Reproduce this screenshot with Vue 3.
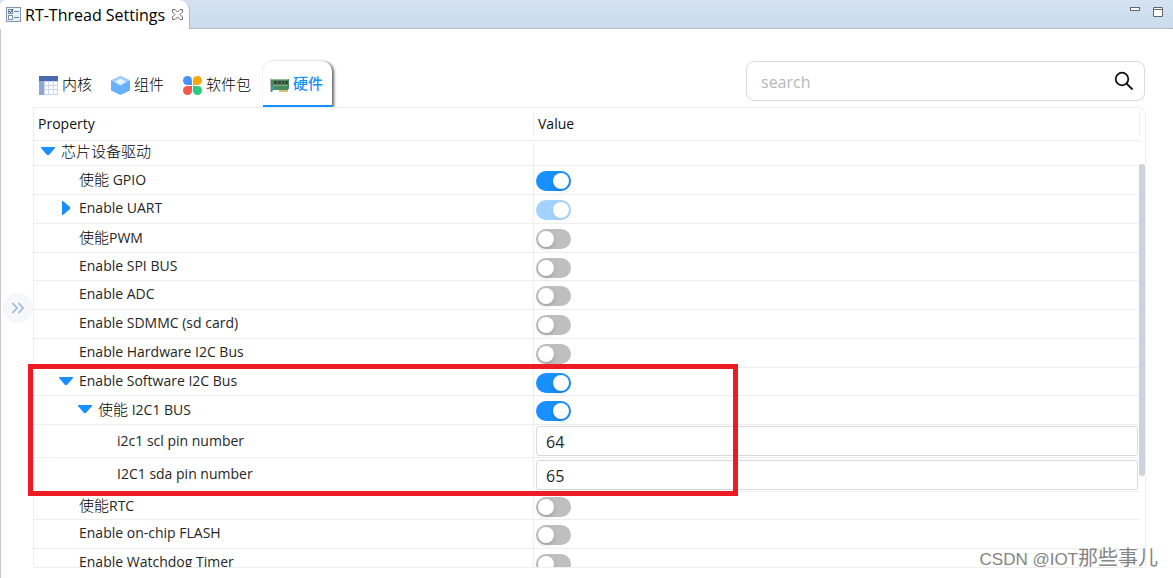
<script setup>
import { ref, reactive } from 'vue'

const tabs = [
  { id: 'kernel', label: '内核' },
  { id: 'component', label: '组件' },
  { id: 'package', label: '软件包' },
  { id: 'hardware', label: '硬件' },
]
const activeTab = ref('hardware')
const search = ref('')

const rows = reactive([
  { zh: '芯片设备驱动', en: '', level: 0, arrow: 'down', kind: 'group' },
  { zh: '使能', en: ' GPIO', level: 1, kind: 'switch', on: true },
  { zh: '', en: 'Enable UART', level: 1, arrow: 'right', kind: 'switch', on: true, disabled: true },
  { zh: '使能', en: 'PWM', level: 1, kind: 'switch', on: false },
  { zh: '', en: 'Enable SPI BUS', level: 1, kind: 'switch', on: false },
  { zh: '', en: 'Enable ADC', level: 1, kind: 'switch', on: false },
  { zh: '', en: 'Enable SDMMC (sd card)', level: 1, kind: 'switch', on: false },
  { zh: '', en: 'Enable Hardware I2C Bus', level: 1, kind: 'switch', on: false },
  { zh: '', en: 'Enable Software I2C Bus', level: 1, arrow: 'down', kind: 'switch', on: true },
  { zh: '使能', en: ' I2C1 BUS', level: 2, arrow: 'down', kind: 'switch', on: true },
  { zh: '', en: 'i2c1 scl pin number', level: 3, kind: 'text', value: '64' },
  { zh: '', en: 'I2C1 sda pin number', level: 3, kind: 'text', value: '65' },
  { zh: '使能', en: 'RTC', level: 1, kind: 'switch', on: false },
  { zh: '', en: 'Enable on-chip FLASH', level: 1, kind: 'switch', on: false },
  { zh: '', en: 'Enable Watchdog Timer', level: 1, kind: 'switch', on: false },
])
</script>

<template>
  <div class="page">
    <header class="titlebar">
      <div class="doc-tab">
        <svg width="15" height="15" viewBox="0 0 15 15" aria-hidden="true">
          <rect x=".5" y=".5" width="14" height="14" fill="#e6f4fd" stroke="#8296b4" />
          <rect x="2.500" y="2.500" width="4" height="4" fill="#fff" stroke="#7d8fa9" />
          <rect x="2.500" y="8.500" width="4" height="4" fill="#fff" stroke="#7d8fa9" />
          <path d="M3 4l1.500 1.500L7 2" fill="none" stroke="#222e44" />
          <path d="M8 4.500h5M8 10.500h5" stroke="#5f7da5" />
        </svg>
        <h1 class="doc-title">RT-Thread Settings</h1>
        <button class="plain" type="button" aria-label="Close">
          <svg width="11" height="11" viewBox="0 0 11 11" aria-hidden="true">
            <path d="M.5.5h2.500l2.500 2.500L8 .5h2.500V3L8 5.500 10.500 8v2.500H8L5.500 8 3 10.500H.5V8L3 5.500.5 3z" fill="#fff" stroke="#6b6b6b" />
          </svg>
        </button>
      </div>
      <div class="window-buttons">
        <button class="plain" type="button" aria-label="Minimize">
          <svg width="10" height="10" viewBox="0 0 10 10" aria-hidden="true">
            <rect x=".5" y=".5" width="9" height="3" fill="#fff" stroke="#666" />
          </svg>
        </button>
        <button class="plain" type="button" aria-label="Maximize">
          <svg width="10" height="10" viewBox="0 0 10 10" aria-hidden="true">
            <path d="M.5.5h9v9h-9zM.5 2.500h9" fill="#fff" stroke="#666" />
          </svg>
        </button>
      </div>
    </header>

    <main class="body">
      <button class="side-toggle" type="button" aria-label="Expand">
        <svg width="14" height="12" viewBox="0 0 14 12" fill="none" stroke="#a0bad8" stroke-width="1.800" aria-hidden="true">
          <path d="M1.500 1l4.500 5-4.500 5M7.500 1L12 6l-4.500 5" />
        </svg>
      </button>

      <div class="toolbar">
        <nav class="tabs">
          <button
            v-for="t in tabs"
            :key="t.id"
            type="button"
            class="tab"
            :class="{ active: t.id === activeTab }"
            @click="activeTab = t.id"
          >
            <svg v-if="t.id === 'kernel'" width="19" height="19" viewBox="0 0 19 19" aria-hidden="true">
              <path d="M0 0h19v19H0z" fill="#c7d5ee" />
              <path d="M0 5h5v14H0z" fill="#8fa6d6" />
              <path d="M0 0h19v5H0z" fill="#4a6bb1" />
              <path d="M6 6h3v3H6zM10 6h4v3h-4zM15 6h3v3h-3zM6 10h3v3H6zM10 10h4v3h-4zM15 10h3v3h-3zM6 14h3v4H6zM10 14h4v4h-4zM15 14h3v4h-3z" fill="#fff" />
            </svg>
            <svg v-else-if="t.id === 'component'" width="19" height="19" viewBox="0 0 19 19" aria-hidden="true">
              <path d="M9.500 0L19 4.500v10L9.500 19 0 14.500v-10z" fill="#66b1ff" />
              <path d="M9.500 0L19 4.500 9.500 10 0 4.500z" fill="#9ccdff" />
              <path d="M9.500 2.500L15 5.500 9.500 9 4 5.500z" fill="#e5f3ff" />
            </svg>
            <svg v-else-if="t.id === 'package'" width="19" height="19" viewBox="0 0 19 19" aria-hidden="true">
              <path d="M4.500 0A4.500 4.500 0 0 1 9 4.500V9H4.500a4.500 4.500 0 0 1 0-9z" fill="#4a90fb" />
              <path d="M14.500 0a4.500 4.500 0 0 1 0 9H10V4.500A4.500 4.500 0 0 1 14.500 0z" fill="#f5a90a" />
              <path d="M4.500 10H9v4.500A4.500 4.500 0 1 1 4.500 10z" fill="#f4574b" />
              <path d="M10 10h4.500a4.500 4.500 0 1 1-4.500 4.500z" fill="#2dcb7c" />
            </svg>
            <svg v-else width="19" height="19" viewBox="0 0 19 19" aria-hidden="true">
              <path d="M0 4h19v10h-1v3H9v-2H3l-1 2H1z" fill="#4b8a5f" />
              <path d="M0 3h1v13H0z" fill="#b4bab6" />
              <path d="M1 4.500h17" stroke="#8fbb95" />
              <path d="M4 6h3v3H4zM8 6h3v3H8zM12 6h2v3h-2zM15 6h3v3h-3z" fill="#33463a" />
              <path d="M3 10.500h15" stroke="#8dbb8c" stroke-dasharray="2 1" />
              <path d="M9 15h9v2H9z" fill="#d5c374" />
              <path d="M1 11l3 2-2 2H1z" fill="#3a9be8" />
            </svg>
            <span>{{ t.label }}</span>
          </button>
        </nav>
        <form class="search" role="search" @submit.prevent>
          <input v-model="search" type="text" placeholder="search" aria-label="search" />
          <button class="plain" type="submit" aria-label="Search">
            <svg width="20" height="20" viewBox="0 0 20 20" fill="none" stroke="#111" stroke-width="1.800" aria-hidden="true">
              <circle cx="8" cy="8" r="6.300" />
              <path d="M12.500 12.500l6 6" />
            </svg>
          </button>
        </form>
      </div>

      <section class="panel">
        <div class="viewport">
          <table class="tree">
            <colgroup>
              <col class="col-name" />
              <col />
            </colgroup>
            <thead>
              <tr>
                <th scope="col"><div class="head">Property</div></th>
                <th scope="col"><div class="head">Value</div></th>
              </tr>
            </thead>
            <tbody>
              <tr v-for="(r, i) in rows" :key="i" :class="'row-' + r.kind">
                <td>
                  <div class="name" :class="'level-' + r.level">
                    <button v-if="r.arrow" type="button" class="plain arrow" :aria-label="'Toggle ' + r.zh + r.en">
                      <svg v-if="r.arrow === 'down'" width="14" height="8" viewBox="0 0 14 8" aria-hidden="true">
                        <path d="M0 0h14v1L8 8H6L0 1z" fill="#1890ff" />
                      </svg>
                      <svg v-else width="14" height="14" viewBox="0 0 14 14" aria-hidden="true">
                        <path d="M3 0h1l7 6v2l-7 6H3z" fill="#1890ff" />
                      </svg>
                    </button>
                    <span v-else class="arrow"></span>
                    <label :for="r.kind === 'group' ? undefined : 'field-' + i"><span v-if="r.zh" class="zh">{{ r.zh }}</span>{{ r.en }}</label>
                  </div>
                </td>
                <td>
                  <input
                    v-if="r.kind === 'switch'"
                    :id="'field-' + i"
                    v-model="r.on"
                    type="checkbox"
                    role="switch"
                    class="switch"
                    :disabled="r.disabled"
                  />
                  <input v-else-if="r.kind === 'text'" :id="'field-' + i" v-model="r.value" type="text" class="field" />
                </td>
              </tr>
            </tbody>
          </table>
        </div>
        <div class="scroll-thumb"></div>
        <div class="highlight"></div>
      </section>
    </main>

    <div class="watermark">CSDN @IOT<span>那些事儿</span></div>
  </div>
</template>

<style>
body {
  margin: 0;
  overflow: hidden;
}
</style>

<style scoped>
* {
  box-sizing: border-box;
}
.page {
  position: relative;
  display: flex;
  flex-direction: column;
  height: 100vh;
  overflow: hidden;
  background: #fff;
  color: #262626;
  font-family: "Open Sans", "Noto Sans CJK SC", sans-serif;
  font-size: 14px;
}
button,
input {
  font: inherit;
  color: inherit;
}
svg {
  display: block;
  flex: none;
}
.plain {
  padding: 0;
  border: 0;
  background: none;
}
.titlebar {
  display: flex;
  justify-content: space-between;
  flex: none;
  height: 29px;
  border-bottom: 1px solid #b4b4cb;
  background: linear-gradient(#d4e2f1, #ccdcec);
}
.doc-tab {
  display: flex;
  align-items: center;
  gap: 4px;
  height: 29px;
  padding: 0 6px;
  border-right: 1px solid #b4b4cb;
  border-radius: 6px 10px 0 0;
  background: #fff;
}
.doc-title {
  margin: 0 3px 0 0;
  color: #000;
  font-size: 16px;
  font-weight: 400;
  line-height: 20px;
}
.window-buttons {
  display: flex;
  align-items: flex-start;
  gap: 13px;
  padding: 7px 10px 0 0;
}
.body {
  position: relative;
  display: flex;
  flex: 1;
  flex-direction: column;
  min-height: 0;
  padding: 32px 27px 10px 32px;
  border-left: 1px solid #c8c8c8;
}
.side-toggle {
  position: absolute;
  top: 264px;
  left: 2px;
  display: grid;
  place-items: center;
  width: 30px;
  height: 30px;
  padding: 0;
  border: 0;
  border-radius: 50%;
  background: #f5f7fa;
}
.toolbar {
  display: flex;
  justify-content: space-between;
  flex: none;
  height: 46px;
}
.tabs {
  display: flex;
  gap: 1px;
  margin-left: -3px;
}
.tab {
  display: flex;
  align-items: center;
  gap: 4px;
  padding: 0 9px;
  border: 0;
  border-radius: 10px 10px 0 0;
  background: none;
  color: #000;
  font-size: 15px;
  font-weight: 300;
  line-height: 20px;
}
.tab svg {
  margin-top: 3px;
}
.tab.active {
  margin-left: 2px;
  padding: 0 9px 0 7px;
  border-bottom: 2px solid #1890ff;
  background: #fff;
  box-shadow: 2px 1px 3px rgba(0, 0, 0, 0.6), 0 0 1px rgba(0, 0, 0, 0.2);
  clip-path: inset(-2px -6px 0 -2px);
  color: #1890ff;
  font-weight: 500;
}
.search {
  display: flex;
  align-items: center;
  flex: 0 1 399px;
  height: 40px;
  margin-right: 1px;
  padding: 0 10px 0 14px;
  border: 1px solid #d9d9d9;
  border-radius: 8px;
}
.search input {
  flex: 1;
  min-width: 0;
  padding: 2px 0 0;
  border: 0;
  outline: 0;
  background: none;
  font-size: 16px;
}
.search input::placeholder {
  color: #b8b8b8;
}
.panel {
  position: relative;
  flex: 1;
  min-height: 0;
  border: 1px solid #eee;
  border-radius: 0 8px 0 0;
}
.viewport {
  height: 100%;
  overflow: hidden;
  padding-right: 5px;
}
.tree {
  width: 100%;
  border-spacing: 0;
  table-layout: fixed;
}
.col-name {
  width: 500px;
}
th {
  height: 33px;
  padding: 0;
  border-bottom: 1px solid #eee;
  color: #111;
  font-weight: 500;
  text-align: left;
}
.head {
  padding-left: 4px;
  border-right: 1px solid #eee;
  line-height: 24px;
}
td {
  height: 29px;
  padding: 0 2px;
  border-bottom: 1px solid #eee;
  vertical-align: top;
}
td:first-child {
  padding: 0;
  border-right: 1px solid #eee;
}
tr:nth-child(4n + 1) td {
  height: 28px;
}
.row-group .name {
  height: 20px;
}
tr.row-group td {
  height: 25px;
}
.row-text .name {
  height: 32px;
}
tr.row-text td {
  height: 33px;
}
tr.row-text + .row-text td {
  height: 34px;
}
.name {
  display: flex;
  align-items: center;
  gap: 6px;
  height: 26px;
  font-weight: 400;
  line-height: 20px;
  white-space: pre;
}
.arrow {
  display: grid;
  place-items: center;
  width: 14px;
}
.level-0 {
  padding-left: 7px;
}
.level-1 {
  padding-left: 25px;
}
.level-2 {
  padding-left: 44px;
}
.level-3 {
  padding-left: 63px;
}
.zh {
  color: #000;
  font-size: 15px;
  font-weight: 300;
}
.switch {
  display: block;
  width: 35px;
  height: 20px;
  margin: 5px 0 0;
  border-radius: 10px;
  appearance: none;
  background: #bfbfbf;
}
.switch::before {
  display: block;
  float: left;
  width: 16px;
  height: 16px;
  margin: 2px;
  border-radius: 50%;
  background: #fff;
  box-shadow: 0 2px 4px rgba(0, 35, 11, 0.2);
  content: "";
}
.switch:checked {
  background: #1890ff;
}
.switch:checked::before {
  margin-left: 17px;
}
.switch:disabled {
  opacity: 0.4;
}
.field {
  display: block;
  width: 100%;
  height: 30px;
  margin-top: 1px;
  padding: 1px 9px 0;
  border: 1px solid #d9d9d9;
  border-radius: 3px;
  outline: 0;
  background: #fff;
  font-size: 16px;
}
.row-text + .row-text .field {
  margin-top: 2px;
}
.scroll-thumb {
  position: absolute;
  top: 56px;
  right: 0;
  width: 6px;
  height: 312px;
  border-radius: 3px;
  background: #ccd3df;
}
.highlight {
  position: absolute;
  top: 256px;
  left: -6px;
  width: 710px;
  height: 132px;
  border: 5px solid #ed1c24;
  pointer-events: none;
}
.watermark {
  position: absolute;
  right: 15px;
  bottom: 4px;
  color: #858585;
  font-family: "Liberation Sans", "Noto Sans CJK SC", sans-serif;
  font-size: 17px;
  line-height: 28px;
  text-shadow: -1px -1px 0 #fff;
  pointer-events: none;
}
.watermark span {
  font-size: 20px;
}
</style>
